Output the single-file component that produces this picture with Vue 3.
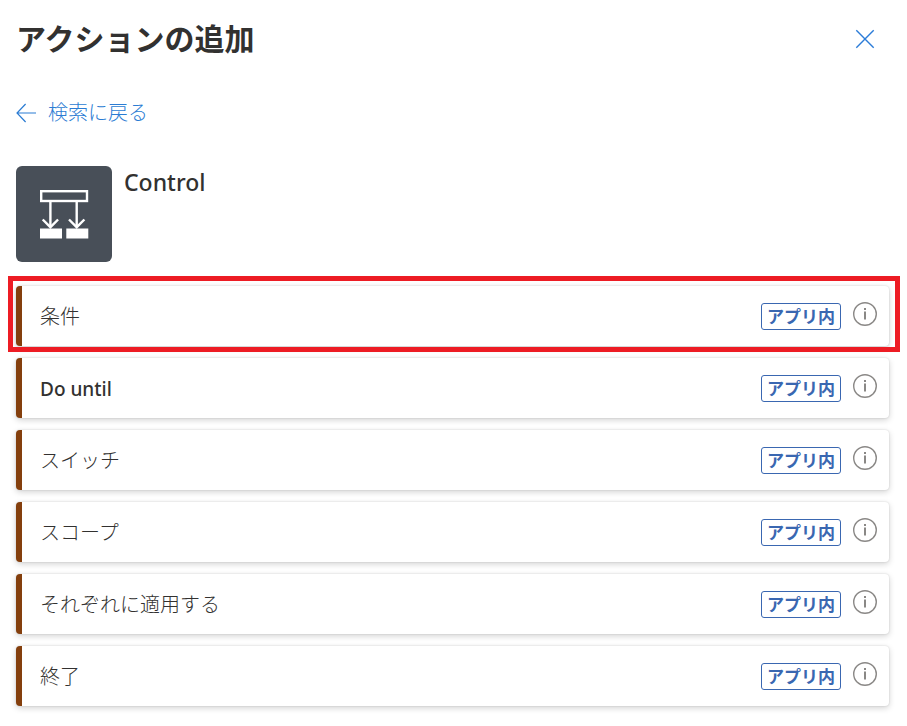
<script setup>
const actions = [
  { name: '条件', highlighted: true },
  { name: 'Do until', latin: true },
  { name: 'スイッチ' },
  { name: 'スコープ' },
  { name: 'それぞれに適用する' },
  { name: '終了' },
]
</script>

<template>
  <main class="panel">
    <header class="header">
      <h1 class="title">アクションの追加</h1>
      <button class="icon-button" type="button" aria-label="閉じる">
        <svg width="20" height="20" viewBox="0 0 20 20" fill="none" stroke="currentColor" stroke-width="1.4">
          <path d="M1.3 1.3 18.7 18.7M18.7 1.3 1.3 18.7" />
        </svg>
      </button>
    </header>

    <a class="back" href="#">
      <svg width="20" height="20" viewBox="0 0 20 20" fill="none" stroke="currentColor" stroke-width="1.2">
        <path d="M20 10H1M9.6 1 1 10l8.600 9" />
      </svg>
      <span>検索に戻る</span>
    </a>

    <section class="connector">
      <svg class="logo" width="96" height="96" viewBox="0 0 96 96">
        <rect width="96" height="96" rx="6" fill="#484f58" />
        <g fill="none" stroke="#fff" stroke-width="2.4">
          <rect x="25.2" y="25.2" width="45.8" height="9.8" />
          <path d="M34.4 35v26M60.7 35v26" />
          <path d="M26.7 53.5l7.7 7.7 7.7-7.7M53 53.5l7.7 7.7 7.7-7.7" />
        </g>
        <path d="M24 62.5h22v10H24zM50.3 62.5h22v10h-22z" fill="#fff" />
      </svg>
      <h2 class="connector-name">Control</h2>
    </section>

    <ul class="actions">
      <li v-for="action in actions" :key="action.name" class="action" :class="{ highlighted: action.highlighted }">
        <button class="name" :class="{ latin: action.latin }" type="button">{{ action.name }}</button>
        <span class="badge">アプリ内</span>
        <button class="icon-button info" type="button" :aria-label="action.name + 'の情報'">
          <svg width="24" height="24" viewBox="0 0 24 24">
            <circle cx="12" cy="12" r="11.3" fill="none" stroke="currentColor" stroke-width="1.4" />
            <path d="M11 6h2v2h-2zM11 9.500h2v8h-2z" fill="currentColor" />
          </svg>
        </button>
      </li>
    </ul>
  </main>
</template>

<style>
body {
  margin: 0;
  background: #fff;
}
</style>

<style scoped>
.panel {
  box-sizing: border-box;
  padding: 15px 18px 20px 16px;
  color: #323130;
  font-family: "Noto Sans", "Noto Sans CJK JP", sans-serif;
}

.header {
  display: flex;
  align-items: center;
  justify-content: space-between;
  padding-right: 14px;
}

.title {
  margin: 0;
  font-size: 30px;
  line-height: 48px;
  font-weight: 700;
}

.icon-button {
  display: block;
  padding: 0;
  border: 0;
  background: none;
  color: #2b7cd8;
  cursor: pointer;
}

.icon-button svg,
.back svg,
.logo {
  display: block;
}

.back {
  display: inline-flex;
  align-items: center;
  gap: 12px;
  margin-top: 34px;
  color: #2b7cd3;
  font-size: 20px;
  line-height: 32px;
  font-weight: 300;
  text-decoration: none;
}

.connector {
  display: flex;
  gap: 12px;
  margin-top: 37px;
}

.connector-name {
  margin: 0;
  font-size: 23px;
  line-height: 32px;
  font-weight: 500;
}

.actions {
  display: flex;
  flex-direction: column;
  gap: 12px;
  margin: 24px 0 0;
  padding: 0;
  list-style: none;
}

.action {
  position: relative;
  box-sizing: border-box;
  display: flex;
  align-items: center;
  min-height: 60px;
  padding-right: 12px;
  border-left: 6px solid #843f0d;
  border-radius: 4px;
  background: #fff;
  box-shadow: 0 2px 6px rgba(0, 0, 0, 0.18), 0 0 2px rgba(0, 0, 0, 0.14);
}

.highlighted::after {
  content: "";
  position: absolute;
  inset: -10px -11px -6px -14px;
  border: 5px solid #ed1c24;
  pointer-events: none;
}

.name {
  flex: 1;
  padding: 2px 18px 0;
  border: 0;
  background: none;
  color: inherit;
  font-family: inherit;
  font-size: 20px;
  line-height: 58px;
  font-weight: 300;
  text-align: left;
  cursor: pointer;
}

.latin {
  font-size: 19px;
  font-weight: 500;
}

.badge {
  box-sizing: border-box;
  width: 80px;
  border: 1px solid #3a67b1;
  border-radius: 3px;
  color: #3a67b1;
  font-size: 17px;
  line-height: 25px;
  font-weight: 700;
  text-align: center;
  white-space: nowrap;
}

.info {
  margin: 0 0 4px 12px;
  color: #8a8886;
}
</style>
